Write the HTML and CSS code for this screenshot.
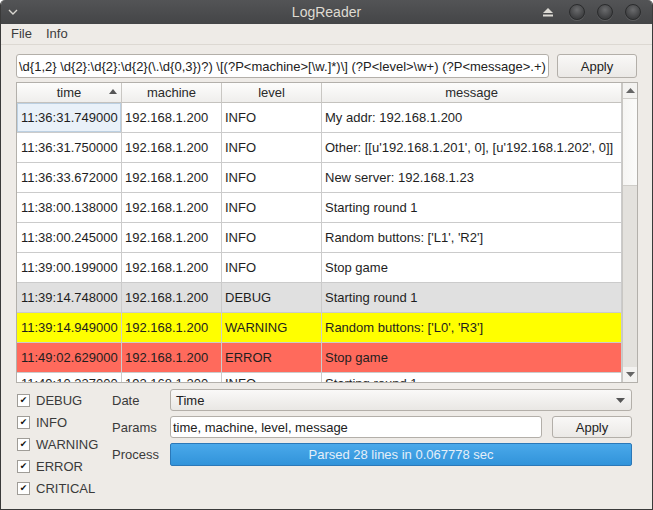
FILE: index.html
```html
<!DOCTYPE html>
<html>
<head>
<meta charset="utf-8">
<link rel="stylesheet" href="styles.css">
</head>
<body>
<div class="window">
  <div class="titlebar">
    <span class="chev">
      <svg width="10" height="6" viewBox="0 0 10 6"><path d="M1 1 L5 5 L9 1" fill="none" stroke="#d8d6d0" stroke-width="1.4"/></svg>
    </span>
    <span class="title">LogReader</span>
    <div class="wbtns">
      <svg class="eject" width="10" height="9" viewBox="0 0 10 9"><path d="M5 0 L10 5 L0 5 Z" fill="#dcdad4"/><rect x="0" y="6.5" width="10" height="2" fill="#dcdad4"/></svg>
      <span class="circ"></span>
      <span class="circ"></span>
      <span class="circ"></span>
    </div>
  </div>
  <div class="menubar">
    <span class="menu">File</span>
    <span class="menu">Info</span>
  </div>
  <div class="content">
    <div class="regex-row">
      <div class="field regex"><span>\d{1,2} \d{2}:\d{2}:\d{2}(\.\d{0,3})?) \[(?P&lt;machine&gt;[\w.]*)\] (?P&lt;level&gt;\w+) (?P&lt;message&gt;.+)</span></div>
      <div class="button apply-top">Apply</div>
    </div>
    <div class="table">
      <div class="table-main">
        <div class="row header">
          <div class="cell hcell">time<span class="sort">
            <svg width="8" height="5" viewBox="0 0 8 5"><path d="M4 0 L8 5 L0 5 Z" fill="#555"/></svg></span></div>
          <div class="cell hcell">machine</div>
          <div class="cell hcell">level</div>
          <div class="cell hcell">message</div>
        </div>
        <div class="body">
          <div class="row"><div class="cell sel">11:36:31.749000</div><div class="cell">192.168.1.200</div><div class="cell">INFO</div><div class="cell">My addr: 192.168.1.200</div></div>
          <div class="row"><div class="cell">11:36:31.750000</div><div class="cell">192.168.1.200</div><div class="cell">INFO</div><div class="cell">Other: [[u'192.168.1.201', 0], [u'192.168.1.202', 0]]</div></div>
          <div class="row"><div class="cell">11:36:33.672000</div><div class="cell">192.168.1.200</div><div class="cell">INFO</div><div class="cell">New server: 192.168.1.23</div></div>
          <div class="row"><div class="cell">11:38:00.138000</div><div class="cell">192.168.1.200</div><div class="cell">INFO</div><div class="cell">Starting round 1</div></div>
          <div class="row"><div class="cell">11:38:00.245000</div><div class="cell">192.168.1.200</div><div class="cell">INFO</div><div class="cell">Random buttons: ['L1', 'R2']</div></div>
          <div class="row"><div class="cell">11:39:00.199000</div><div class="cell">192.168.1.200</div><div class="cell">INFO</div><div class="cell">Stop game</div></div>
          <div class="row debug"><div class="cell">11:39:14.748000</div><div class="cell">192.168.1.200</div><div class="cell">DEBUG</div><div class="cell">Starting round 1</div></div>
          <div class="row warning"><div class="cell">11:39:14.949000</div><div class="cell">192.168.1.200</div><div class="cell">WARNING</div><div class="cell">Random buttons: ['L0', 'R3']</div></div>
          <div class="row error"><div class="cell">11:49:02.629000</div><div class="cell">192.168.1.200</div><div class="cell">ERROR</div><div class="cell">Stop game</div></div>
          <div class="row partial"><div class="cell">11:49:10.337000</div><div class="cell">192.168.1.200</div><div class="cell">INFO</div><div class="cell">Starting round 1</div></div>
        </div>
      </div>
      <div class="scrollbar">
        <div class="sbtn"><svg width="9" height="5" viewBox="0 0 9 5"><path d="M4.5 0 L9 5 L0 5 Z" fill="#666"/></svg></div>
        <div class="track"><div class="thumb"></div></div>
        <div class="sbtn"><svg width="9" height="5" viewBox="0 0 9 5"><path d="M0 0 L9 0 L4.5 5 Z" fill="#666"/></svg></div>
      </div>
    </div>
    <div class="bottom">
      <div class="checks">
        <div class="check"><span class="box">&#x2714;</span>DEBUG</div>
        <div class="check"><span class="box">&#x2714;</span>INFO</div>
        <div class="check"><span class="box">&#x2714;</span>WARNING</div>
        <div class="check"><span class="box">&#x2714;</span>ERROR</div>
        <div class="check"><span class="box">&#x2714;</span>CRITICAL</div>
      </div>
      <div class="form">
        <div class="label">Date</div>
        <div class="combo"><span>Time</span><svg width="9" height="5" viewBox="0 0 9 5"><path d="M0 0 L9 0 L4.5 5 Z" fill="#555"/></svg></div>
        <div class="label">Params</div>
        <div class="params-row">
          <div class="field params">time, machine, level, message</div>
          <div class="button apply-bottom">Apply</div>
        </div>
        <div class="label">Process</div>
        <div class="progress">Parsed 28 lines in 0.067778 sec</div>
      </div>
    </div>
  </div>
</div>
</body>
</html>
```
FILE: styles.css
```css
* { box-sizing: border-box; }
html, body { margin: 0; padding: 0; background: #ffffff; }
body {
  font-family: "Liberation Sans", Arial, sans-serif;
  font-size: 13px;
  color: #222;
}
.window {
  width: 653px;
  height: 510px;
  display: flex;
  flex-direction: column;
  background: #eeebe7;
  border: 1px solid #3a3a3a;
  border-top: none;
  border-radius: 5px 5px 0 0;
  overflow: hidden;
}
.titlebar {
  height: 24px;
  flex: none;
  background: linear-gradient(#535456, #444547);
  display: flex;
  align-items: center;
  position: relative;
  margin: 0 -1px;
}
.chev { width: 10px; margin-left: 8px; display: flex; }
.title {
  position: absolute;
  left: 0; right: 0;
  text-align: center;
  color: #dfdbd2;
  font-size: 14px;
  top: 4px;
}
.wbtns {
  margin-left: auto;
  display: flex;
  align-items: center;
  gap: 12px;
  margin-right: 12px;
}
.eject { margin-right: 4px; }
.circ {
  width: 16px;
  height: 16px;
  border-radius: 50%;
  background: radial-gradient(circle at 50% 35%, #6a6b6d, #3f4042 70%);
  border: 1px solid #2b2c2d;
  box-shadow: 0 1px 0 #5d5e60;
}
.menubar {
  height: 21px;
  flex: none;
  display: flex;
  align-items: center;
  padding-left: 10px;
  padding-bottom: 1px;
  gap: 14px;
  border-bottom: 1px solid #dcd8d2;
  color: #3c3c3c;
}
.menu { font-size: 13px; }
.content {
  flex: 1;
  padding: 9px 15px 0 15px;
  display: flex;
  flex-direction: column;
}
.regex-row {
  display: flex;
  gap: 8px;
  height: 24px;
}
.field {
  background: #fff;
  border: 1px solid #b3afa9;
  border-radius: 3px;
  display: flex;
  align-items: center;
  overflow: hidden;
  white-space: nowrap;
  color: #222;
}
.regex { width: 533px; padding-left: 2px; }
.button {
  border: 1px solid #b3afa9;
  border-radius: 3px;
  background: linear-gradient(#f9f8f7, #ebe9e6);
  display: flex;
  align-items: center;
  justify-content: center;
  color: #222;
  font-size: 13px;
}
.apply-top { width: 80px; }
.table {
  margin-top: 4px;
  width: 622px;
  height: 301px;
  border: 1px solid #b3b0ab;
  background: #fff;
  display: flex;
  overflow: hidden;
}
.table-main { width: 605px; display: flex; flex-direction: column; }
.row {
  display: grid;
  grid-template-columns: 105px 100px 100px 300px;
  height: 30px;
  flex: none;
}
.cell {
  border-right: 1px solid #cbcbcb;
  border-bottom: 1px solid #cbcbcb;
  display: flex;
  align-items: center;
  padding-left: 3px;
  white-space: nowrap;
  overflow: hidden;
  color: #1e1e1e;
}
.cell:first-child { padding-left: 4px; }
.partial .cell { align-items: flex-start; padding-top: 3px; }
.header { height: 20px; }
.hcell {
  background: linear-gradient(#fdfdfc, #efeeec);
  border-right: 1px solid #c9c7c3;
  border-bottom: 1px solid #c4c2be;
  justify-content: center;
  padding-left: 0;
  position: relative;
  color: #2a2a2a;
}
.header .hcell:first-child { padding-left: 0; }
.sort { position: absolute; right: 4px; top: 6px; display: flex; }
.body { flex: 1; overflow: hidden; }
.sel {
  background: #e9f1f9;
  box-shadow: inset 0 0 0 1px #bcd0e2;
}
.debug .cell { background: #e0e0e0; }
.warning .cell { background: #ffff00; }
.error .cell { background: #ff6a5c; }
.scrollbar {
  width: 15px;
  display: flex;
  flex-direction: column;
  background: #e3e1dd;
  border-left: 1px solid #c9c7c3;
}
.sbtn {
  height: 15px;
  flex: none;
  display: flex;
  align-items: center;
  justify-content: center;
  background: #f3f2f0;
}
.track { flex: 1; }
.thumb {
  height: 88px;
  background: linear-gradient(90deg, #f6f5f3, #fbfbfa);
  border: 1px solid #cfcdc9;
  border-left: none;
  border-right: none;
}
.bottom {
  margin-top: 6px;
  display: flex;
}
.checks {
  width: 96px;
  display: flex;
  flex-direction: column;
}
.check {
  height: 22px;
  display: flex;
  align-items: center;
  color: #3a3a3a;
  font-size: 13px;
}
.box {
  width: 13px;
  height: 13px;
  border: 1px solid #9f9c97;
  background: #fff;
  margin-left: 1px;
  margin-right: 6px;
  display: flex;
  align-items: center;
  justify-content: center;
  font-size: 9px;
  line-height: 1;
  color: #111;
  font-family: "DejaVu Sans", sans-serif;
}
.form {
  flex: 1;
  display: grid;
  grid-template-columns: 58px 462px;
  grid-template-rows: 22px 22px 23px;
  row-gap: 5px;
}
.label {
  display: flex;
  align-items: center;
  color: #3a3a3a;
  font-size: 13px;
}
.combo {
  border: 1px solid #b3afa9;
  border-radius: 3px;
  background: linear-gradient(#faf9f8, #e9e7e4);
  display: flex;
  align-items: center;
  justify-content: space-between;
  padding: 0 6px 0 5px;
  font-size: 13px;
  color: #222;
}
.params-row { display: flex; gap: 10px; }
.params { width: 372px; padding-left: 2px; font-size: 13px; }
.apply-bottom { width: 80px; }
.progress {
  border: 1px solid #2b78b8;
  border-radius: 2px;
  background: linear-gradient(#4aa9ea, #3193da);
  color: #e4eff9;
  display: flex;
  align-items: center;
  justify-content: center;
  font-size: 13px;
}
```
